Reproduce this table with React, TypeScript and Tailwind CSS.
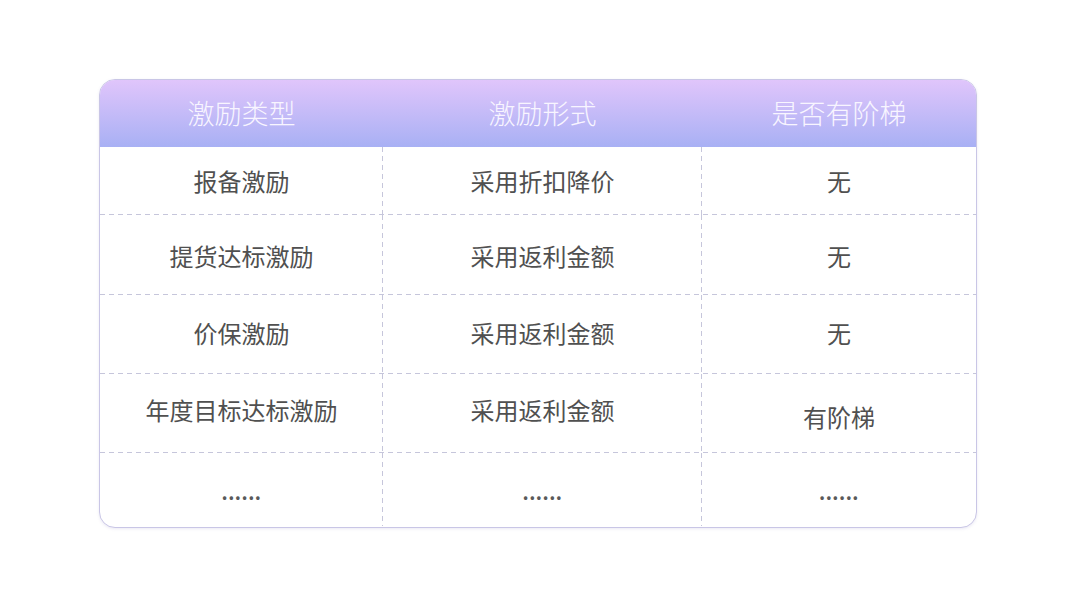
const rows: { cells: [string, string, string]; h: string; lift?: boolean }[] = [
  { cells: ["报备激励", "采用折扣降价", "无"], h: "h-[68px]" },
  { cells: ["提货达标激励", "采用返利金额", "无"], h: "h-[80px]" },
  { cells: ["价保激励", "采用返利金额", "无"], h: "h-[79px]" },
  { cells: ["年度目标达标激励", "采用返利金额", "有阶梯"], h: "h-[79px]", lift: true },
  { cells: ["......", "......", "......"], h: "h-[73px]" },
]

const cols = ["w-[283px]", "w-[319px]", "flex-1"]

const hLine =
  "bg-[repeating-linear-gradient(90deg,#c6c6db_0_5px,transparent_5px_9px)] bg-[length:100%_1px] bg-bottom bg-no-repeat"
const vLine =
  "bg-[repeating-linear-gradient(180deg,#c6c6db_0_5px,transparent_5px_9px)] bg-[length:1px_100%] bg-right bg-no-repeat"

export default function App() {
  return (
    <div className="h-[607px] w-[1080px] bg-white pl-[99px] pt-[79px] font-['Noto_Sans_CJK_SC',sans-serif]">
      <div className="h-[449px] w-[878px] overflow-hidden rounded-[16px] border-[1.5px] border-[#c9c6e6] bg-white shadow-[0_1px_3px_rgba(120,110,180,0.15)]">
        <div className="flex h-[67px] bg-gradient-to-b from-[#e0c5fb] to-[#a8b0f4] text-[27px] font-light text-[#f8f5ff]">
          {["激励类型", "激励形式", "是否有阶梯"].map((t, i) => (
            <div key={t} className={`${cols[i]} flex items-center justify-center`}>
              {t}
            </div>
          ))}
        </div>
        {rows.map((r, ri) => (
          <div key={ri} className={`flex ${r.h} ${ri < rows.length - 1 ? hLine : ""}`}>
            {r.cells.map((c, ci) => (
              <div
                key={ci}
                className={`${cols[ci]} flex items-center justify-center text-[24px] text-[#505050] ${
                  ci < 2 ? vLine : ""
                }`}
              >
                <span
                  className={
                    c === "......"
                      ? "pt-[6px] text-[19px] font-semibold tracking-[0.5px] text-[#5a5a5a]"
                      : r.lift && ci < 2
                        ? "pb-[8px]"
                        : r.lift
                          ? "pt-[6px]"
                          : ri === 2
                            ? "pb-[4px]"
                            : ri === 1
                              ? "pt-[2px]"
                              : ""
                  }
                >
                  {c}
                </span>
              </div>
            ))}
          </div>
        ))}
      </div>
    </div>
  )
}
